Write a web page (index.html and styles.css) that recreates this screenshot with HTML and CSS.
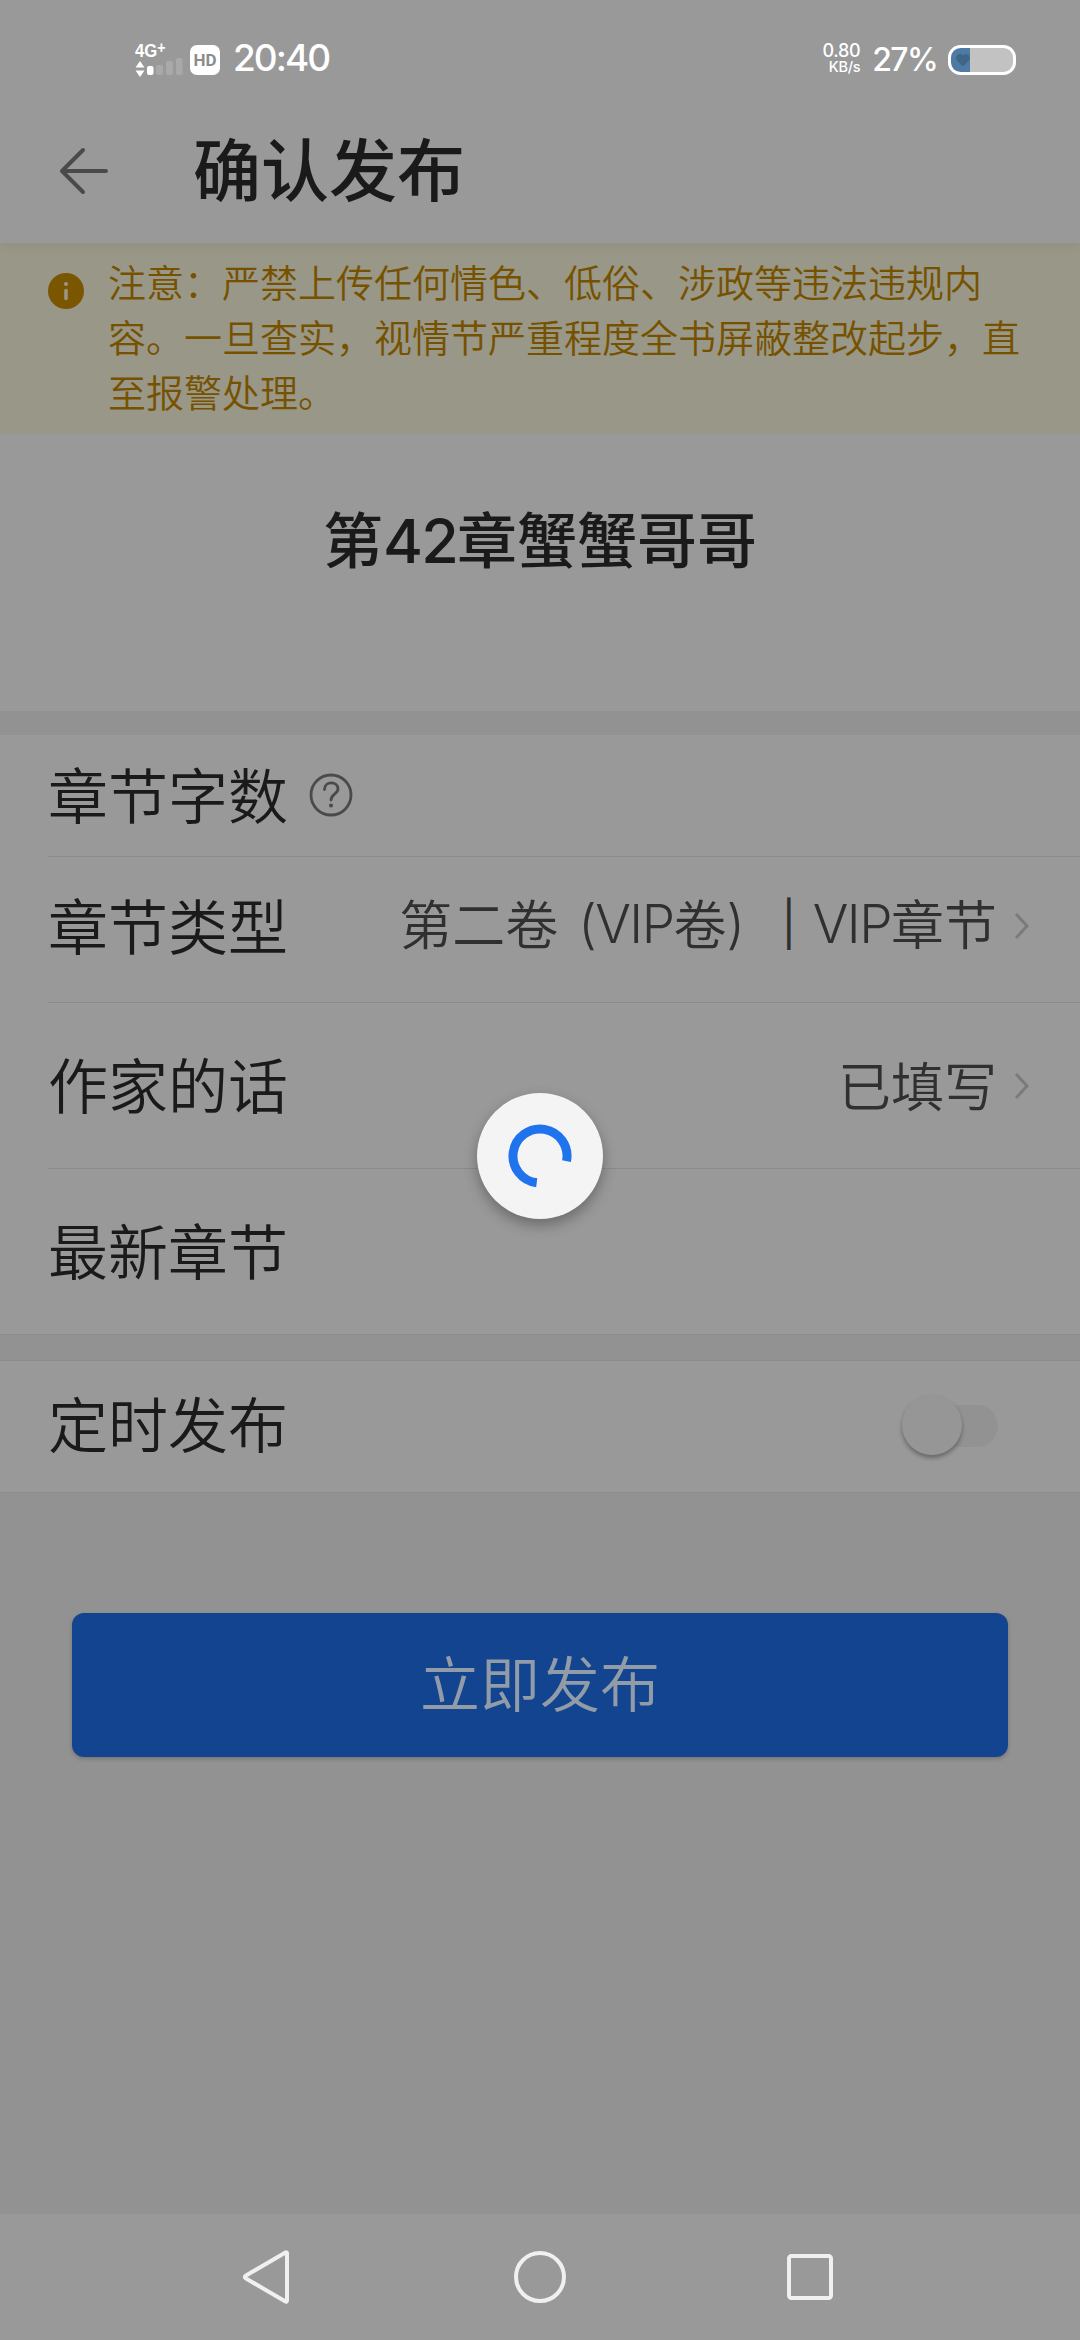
FILE: index.html
```html
<!DOCTYPE html>
<html lang="zh-CN">
<head>
<meta charset="utf-8">
<title>确认发布</title>
<link rel="stylesheet" href="styles.css">
</head>
<body>
<div class="screen">
  <div class="status">
    <div class="network">
      <div class="net-type">4G<span class="plus">+</span></div>
      <svg class="signal" width="49" height="19" viewBox="0 0 49 19"><path d="M5 1l4.500 6.500H.5zM5 17l4.500-6.500H.5z" fill="#fff"/><rect x="12" y="6" width="6.500" height="9" rx="2" fill="#fff"/><g fill="#a9a9a9"><rect x="21" y="5" width="7" height="10" rx="2"/><rect x="31" y="1" width="7" height="14" rx="2"/></g><rect x="41" y="-2" width="6.500" height="17" rx="2" fill="#a9a9a9"/></svg>
    </div>
    <div class="hd">HD</div>
    <div class="clock">20:40</div>
    <div class="speed"><span>0.80</span><span class="unit">KB/s</span></div>
    <div class="percent">27%</div>
    <svg class="battery" width="68" height="30" viewBox="0 0 68 30"><rect x="1.500" y="1.500" width="65" height="27" rx="11" fill="#c2c2c2"/><path d="M22 2H12Q2 2 2 12v6q0 10 10 10h10z" fill="#4d7ba5"/><path d="M15 21.500l-5.500-5.500c-4-4 1.500-9.500 5.500-5.500 4-4 9.500 1.500 5.500 5.500z" fill="#3f6687"/><rect x="1.500" y="1.500" width="65" height="27" rx="11" fill="none" stroke="#fff" stroke-width="3"/></svg>
  </div>
  <header class="header">
    <svg class="back" width="52" height="50" viewBox="0 0 52 50" fill="none" stroke="#4a4a4a" stroke-width="4" stroke-linecap="round" stroke-linejoin="round"><path d="M25 4L4 25l21 21M4 25h44"/></svg>
    <h1 class="title">确认发布</h1>
  </header>
  <section class="notice">
    <svg class="info" width="36" height="36" viewBox="0 0 36 36"><circle cx="18" cy="18" r="18" fill="#7a5600"/><circle cx="18" cy="11" r="2" fill="#999787"/><path d="M18 17.500v8" stroke="#999787" stroke-width="3.500" stroke-linecap="round"/></svg>
    <p class="notice-text">注意：严禁上传任何情色、低俗、涉政等违法违规内<br>容。一旦查实，视情节严重程度全书屏蔽整改起步，直<br>至报警处理。</p>
  </section>
  <section class="chapter"><h2 class="chapter-title">第<span class="num">42</span>章蟹蟹哥哥</h2></section>
  <section class="list">
    <div class="row row-count"><span class="label">章节字数</span>
      <svg class="help" width="44" height="44" viewBox="0 0 44 44" fill="none" stroke="#4a4a4a" stroke-width="2.800" stroke-linecap="round"><circle cx="22" cy="22" r="20"/><path d="M15.500 16.500c0-9 13.500-8.500 13.500-.5 0 5-7 5-7 11"/><circle cx="22" cy="32.500" r="1" fill="#4a4a4a" stroke-width="2"/></svg>
    </div>
    <div class="row row-type"><span class="label">章节类型</span>
      <span class="value"><span>第二卷</span><span class="latin paren-l">(VIP</span><span>卷</span><span class="latin">)</span><span class="latin bar">|</span><span class="latin vip">VIP</span><span>章节</span></span>
      <svg class="chevron" width="18" height="30" viewBox="0 0 18 30"><path d="M3 3l11 12L3 27"/></svg>
    </div>
    <div class="row row-note"><span class="label">作家的话</span>
      <span class="value">已填写</span>
      <svg class="chevron" width="18" height="30" viewBox="0 0 18 30"><path d="M3 3l11 12L3 27"/></svg>
    </div>
    <div class="row row-latest"><span class="label">最新章节</span></div>
  </section>
  <section class="timer"><span class="label">定时发布</span><span class="switch"><span class="knob"></span></span></section>
  <main class="actions"><button class="publish">立即发布</button></main>
  <nav class="navbar">
    <svg width="60" height="60" viewBox="0 0 60 60"><path d="M47 6.500v47a1 1 0 0 1-1.500 1L6 31.500q-2.500-1.500 0-3L45.500 5.500a1 1 0 0 1 1.500 1z"/></svg>
    <svg width="60" height="60" viewBox="0 0 60 60"><circle cx="30" cy="30" r="24"/></svg>
    <svg width="60" height="60" viewBox="0 0 60 60"><rect x="9" y="9" width="42" height="42" rx="2.500"/></svg>
  </nav>
  <div class="loader"><svg width="64" height="64" viewBox="-32 -32 64 64"><path d="M-3.290 26.800A27 27 0 1 1 26.500 5.150" fill="none" stroke="#1f73ed" stroke-width="9"/></svg></div>
</div>
</body>
</html>
```
FILE: styles.css
```css
* { box-sizing: border-box; }
body {
  margin: 0;
  background: #929292;
  color: #1a1a1a;
  font-family: "Noto Sans CJK SC", sans-serif;
}
svg { display: block; flex: none; }
.screen {
  position: relative;
  display: flex;
  flex-direction: column;
  width: 1080px;
  height: 2340px;
  overflow: hidden;
}
.status {
  display: flex;
  align-items: center;
  height: 120px;
  padding: 0 64px 0 135px;
  background: #999;
  color: #fff;
  font-family: Inter, sans-serif;
}
.network { width: 55px; height: 38px; }
.net-type {
  height: 19px;
  font: 700 19px/19px "Liberation Sans", sans-serif;
  transform: scaleX(.88);
  transform-origin: left;
}
.plus { position: relative; top: -4px; font-size: 16px; }
.signal { overflow: visible; }
.hd {
  width: 30px;
  height: 30px;
  border-radius: 7px;
  background: #fff;
  color: #8c8c8c;
  font: 700 17px/30px Roboto, sans-serif;
  text-align: center;
}
.clock {
  margin: -4px 0 0 13px;
  font: 500 37px/46px "Inter", sans-serif;
  letter-spacing: -2px;
}
.speed {
  display: flex;
  flex-direction: column;
  align-items: flex-end;
  margin: -2px 0 0 auto;
  font-size: 18px;
  font-weight: 500;
  line-height: 16px;
  letter-spacing: -.3px;
}
.unit { font-size: 14.500px; }
.percent {
  margin: 0 11px 0 12px;
  font-size: 32px;
  font-weight: 500;
  line-height: 40px;
  letter-spacing: -1.700px;
}
.header {
  position: relative;
  display: flex;
  align-items: center;
  height: 123px;
  padding: 0 0 21px 58px;
  background: #999;
  box-shadow: 0 2px 12px rgba(0, 0, 0, .07);
  clip-path: inset(0 0 -20px 0);
}
.title {
  margin: -8px 0 0 83px;
  font-size: 68px;
  font-weight: 500;
  line-height: 80px;
}
.notice {
  display: flex;
  height: 191px;
  padding: 12px 0 0 48px;
  background: #999787;
  color: #765200;
}
.info { margin-top: 18px; }
.notice-text {
  margin: -2px 0 0 24px;
  font-size: 38px;
  font-weight: 350;
  line-height: 55px;
  white-space: nowrap;
}
.chapter {
  height: 277px;
  padding-top: 63px;
  background: #999;
  text-align: center;
}
.chapter-title {
  margin: 0;
  font-size: 60px;
  font-weight: 500;
  line-height: 80px;
}
.num { font: 500 61px/80px Inter, sans-serif; letter-spacing: -1.700px; }
.list {
  margin-top: 24px;
  background: #999;
}
.row {
  position: relative;
  display: flex;
  margin-left: 48px;
  padding-right: 49px;
  border-bottom: 1px solid #8b8b8b;
}
.row-count { height: 122px; padding-top: 18px; }
.row-type { height: 146px; padding-top: 27px; }
.row-note { height: 166px; padding-top: 40px; }
.row-latest {
  height: 166px;
  margin-left: 0;
  padding: 40px 0 0 48px;
}
.label {
  font-size: 60px;
  font-weight: 350;
  line-height: 80px;
}
.help { margin: 20px 0 0 21px; }
.value {
  display: flex;
  margin-left: auto;
  color: #303030;
  font-size: 53px;
  font-weight: 350;
  line-height: 80px;
}
.row-type .value { margin-top: -2px; }
.row-note .value { margin-top: 1px; }
.latin { font: 300 53px/84px Inter, sans-serif; letter-spacing: -1.500px; }
.paren-l { margin-left: 20px; }
.bar { margin-left: 38px; font-size: 44px; font-weight: 400; }
.vip { margin-left: 18px; }
.chevron {
  margin: 28px 0 0 16px;
  fill: none;
  stroke: #7b7b7b;
  stroke-width: 3;
}
.row-type .chevron { margin-top: 27px; }
.timer {
  display: flex;
  height: 133px;
  margin-top: 25px;
  padding: 21px 82px 0 48px;
  border-top: 1px solid #8c8c8c;
  border-bottom: 1px solid #8c8c8c;
  background: #999;
}
.switch {
  width: 88px;
  height: 42px;
  margin: 23px 0 0 auto;
  border-radius: 21px;
  background: #929292;
}
.knob {
  display: block;
  width: 60px;
  height: 60px;
  margin: -10px 0 0 -8px;
  border-radius: 50%;
  background: #969696;
  box-shadow: 0 3px 4px rgba(0, 0, 0, .32);
}
.actions { height: 721px; padding: 120px 72px 0; }
.publish {
  display: block;
  width: 936px;
  height: 144px;
  padding: 0 0 9px;
  border: 0;
  border-radius: 12px;
  background: #12448f;
  box-shadow: 0 2px 4px rgba(0, 0, 0, .2);
  color: #929ba8;
  font: 350 60px/80px "Noto Sans CJK SC", sans-serif;
}
.navbar {
  display: flex;
  justify-content: center;
  gap: 210px;
  flex: 1;
  padding-top: 33px;
  background: #999;
  fill: none;
  stroke: #f0f0f0;
  stroke-width: 4;
}
.loader {
  position: absolute;
  top: 1093px;
  left: 477px;
  display: grid;
  place-items: center;
  width: 126px;
  height: 126px;
  border-radius: 50%;
  background: #f4f4f4;
  box-shadow: 0 6px 14px rgba(0, 0, 0, .3);
}
```
